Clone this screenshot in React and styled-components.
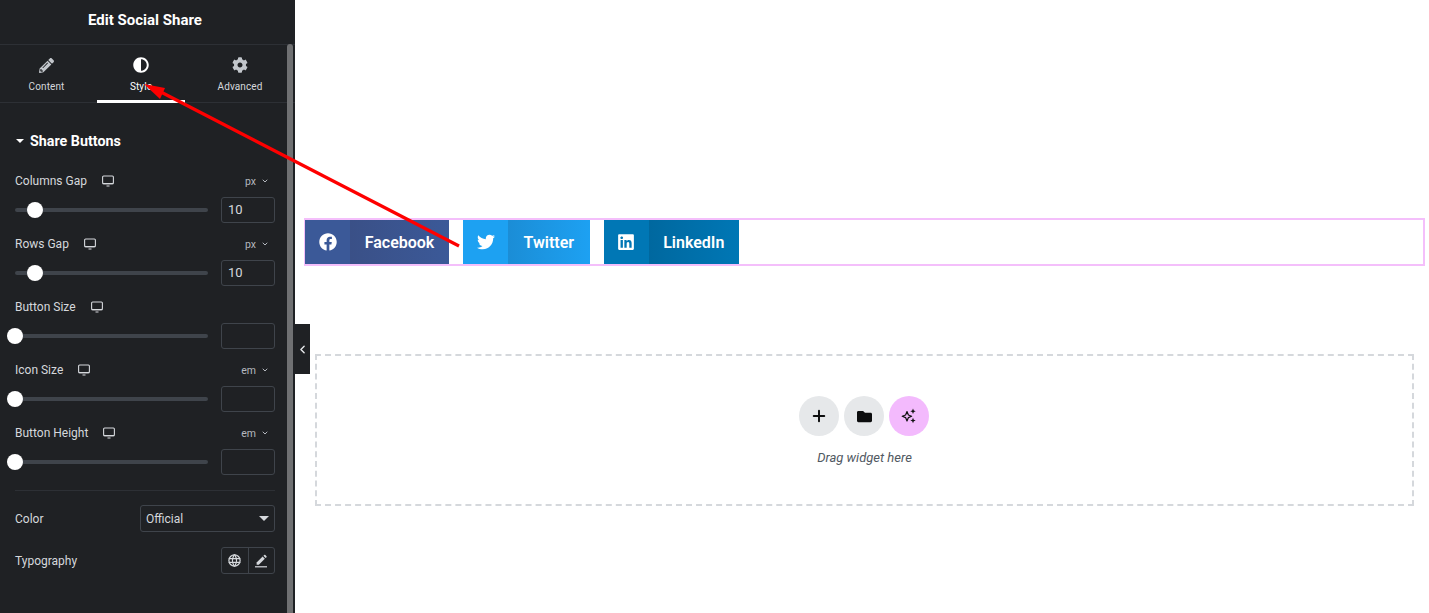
import styled, { createGlobalStyle } from "styled-components";
import { FaFacebook, FaTwitter, FaLinkedin, FaPencilAlt, FaAdjust, FaCog, FaFolder } from "react-icons/fa";
import { FiChevronDown, FiChevronLeft, FiPlus } from "react-icons/fi";
import { TbWorld } from "react-icons/tb";

const GlobalStyle = createGlobalStyle`
  html, body {
    margin: 0;
    height: 100%;
    overflow: hidden;
    background: #fff;
    font-family: Roboto, "Liberation Sans", sans-serif;
  }
  * {
    box-sizing: border-box;
  }
`;

const controls = [
  { label: "Columns Gap", unit: "px", value: "10", knob: 20 },
  { label: "Rows Gap", unit: "px", value: "10", knob: 20 },
  { label: "Button Size", unit: null, value: "", knob: 0 },
  { label: "Icon Size", unit: "em", value: "", knob: 0 },
  { label: "Button Height", unit: "em", value: "", knob: 0 },
];

const shares = [
  { name: "Facebook", Icon: FaFacebook, width: 144, color: "#3b5998", dark: "#3a5087" },
  { name: "Twitter", Icon: FaTwitter, width: 126.5, color: "#1da1f2", dark: "#1b8dd6" },
  { name: "LinkedIn", Icon: FaLinkedin, width: 135.5, color: "#0077b5", dark: "#00689f" },
];

function DesktopIcon() {
  return (
    <svg width="12" height="12" viewBox="0 0 12 12" fill="none" stroke="#d5d8dc" strokeWidth="1.1">
      <rect x="0.6" y="1" width="10.8" height="7.6" rx="1" />
      <path d="M0.6 8.6h10.8M4.5 11h3" />
    </svg>
  );
}

function EditIcon() {
  return (
    <svg width="14" height="14" viewBox="0 0 14 14" fill="#d5d8dc">
      <path d="M2.6 8.6 8.6 2.6l2.2 2.2-6 6H2.6z" />
      <path d="M9.4 1.8l.9-.8c.3-.3.7-.3 1 0l1.2 1.2c.3.3.3.7 0 1l-.9.8z" />
      <rect x="1" y="12.2" width="12" height="1.2" />
    </svg>
  );
}

function SparkleIcon() {
  return (
    <svg width="18" height="18" viewBox="0 0 18 18" fill="none">
      <path d="M7 4.6 8.4 8l3.2 1.2L8.4 10.6 7 14l-1.4-3.4L2.2 9.2 5.6 8z" stroke="#111" strokeWidth="1.2" strokeLinejoin="round" />
      <path d="M13 1.6l.8 1.9 1.9.8-1.9.8-.8 1.9-.8-1.9-1.9-.8 1.9-.8zM13 10.8l.8 1.9 1.9.8-1.9.8-.8 1.9-.8-1.9-1.9-.8 1.9-.8z" fill="#111" />
    </svg>
  );
}

export default function App() {
  return (
    <Page>
      <GlobalStyle />
      <Sidebar>
        <Header>Edit Social Share</Header>
        <Tabs>
          <Tab>
            <TabIcon><FaPencilAlt size={15} /></TabIcon>
            Content
          </Tab>
          <Tab $active>
            <TabIcon $active><FaAdjust size={16} /></TabIcon>
            Style
          </Tab>
          <Tab>
            <TabIcon><FaCog size={16} /></TabIcon>
            Advanced
          </Tab>
        </Tabs>
        <Panel>
          <SectionTitle>
            <Caret $size={4} />
            Share Buttons
          </SectionTitle>
          {controls.map((control) => (
            <Control key={control.label}>
              <LabelRow>
                <Label>{control.label}</Label>
                <DesktopIcon />
                {control.unit && (
                  <Unit>
                    {control.unit}
                    <FiChevronDown size={8} strokeWidth={3} />
                  </Unit>
                )}
              </LabelRow>
              <SliderRow>
                <Track>
                  <Knob $left={control.knob} />
                </Track>
                <NumberBox>{control.value}</NumberBox>
              </SliderRow>
            </Control>
          ))}
          <Divider />
          <FieldRow>
            <Label>Color</Label>
            <Select>
              Official
              <Caret $size={5} />
            </Select>
          </FieldRow>
          <TypographyRow>
            <Label>Typography</Label>
            <ButtonGroup>
              <GroupButton><TbWorld size={15} /></GroupButton>
              <GroupButton><EditIcon /></GroupButton>
            </ButtonGroup>
          </TypographyRow>
        </Panel>
        <Scrollbar />
      </Sidebar>
      <CollapseHandle>
        <FiChevronLeft size={13} strokeWidth={2.6} />
      </CollapseHandle>
      <Canvas>
        <Widget>
          {shares.map(({ name, Icon, width, color, dark }) => (
            <ShareButton key={name} $width={width} $color={color}>
              <ShareIcon><Icon size={18} /></ShareIcon>
              <ShareText $color={color} $dark={dark}>{name}</ShareText>
            </ShareButton>
          ))}
        </Widget>
        <DropZone>
          <DropActions>
            <RoundButton><FiPlus size={18} strokeWidth={2.6} /></RoundButton>
            <RoundButton><FaFolder size={15} /></RoundButton>
            <RoundButton $accent><SparkleIcon /></RoundButton>
          </DropActions>
          <DropText>Drag widget here</DropText>
        </DropZone>
      </Canvas>
      <Arrow width="1429" height="613" viewBox="0 0 1429 613">
        <path d="M459 246 157 90" stroke="#fe0000" strokeWidth="3.2" fill="none" />
        <path d="M144 84 165 88 160 99z" fill="#fe0000" />
      </Arrow>
    </Page>
  );
}

const Page = styled.div`
  position: relative;
  display: flex;
  width: 100%;
  height: 100vh;
  overflow: hidden;
`;

const Sidebar = styled.aside`
  position: relative;
  flex: 0 0 295px;
  height: 100%;
  background: #1f2124;
  color: #d5d8dc;
`;

const Header = styled.div`
  height: 45px;
  padding-top: 11px;
  border-bottom: 1px solid #2d3035;
  color: #fff;
  font-size: 15px;
  font-weight: 700;
  line-height: 18px;
  text-align: center;
  padding-right: 5px;
`;

const Tabs = styled.div`
  display: grid;
  grid-template-columns: 97px 88px 110px;
  height: 58px;
  border-bottom: 1px solid #2d3035;
`;

const Tab = styled.div`
  display: flex;
  flex-direction: column;
  align-items: center;
  height: 58px;
  padding-top: 11px;
  font-size: 10px;
  line-height: 13px;
  letter-spacing: 0.1px;
  color: ${(props) => (props.$active ? "#fff" : "#d5d8dc")};
  border-bottom: 3px solid ${(props) => (props.$active ? "#fff" : "transparent")};

  &:first-child {
    padding-right: 4px;
  }
`;

const TabIcon = styled.span`
  display: flex;
  align-items: center;
  justify-content: center;
  height: 18px;
  margin-bottom: 6px;
  color: ${(props) => (props.$active ? "#fff" : "#c2c6cb")};
`;

const Panel = styled.div`
  padding: 29px 20px 0 15px;
`;

const SectionTitle = styled.div`
  display: flex;
  align-items: center;
  gap: 6px;
  height: 18px;
  margin-bottom: 23px;
  padding-left: 1px;
  color: #fff;
  font-size: 14.3px;
  font-weight: 700;
  line-height: 18px;
`;

const Caret = styled.span`
  width: 0;
  height: 0;
  border-left: ${(props) => props.$size}px solid transparent;
  border-right: ${(props) => props.$size}px solid transparent;
  border-top: ${(props) => props.$size}px solid currentColor;
`;

const Control = styled.div`
  height: 63px;
`;

const LabelRow = styled.div`
  display: flex;
  align-items: center;
  gap: 15px;
  height: 16px;
  margin-bottom: 8px;
`;

const Label = styled.span`
  font-size: 12px;
  line-height: 16px;
  color: #d5d8dc;
`;

const Unit = styled.span`
  display: flex;
  align-items: center;
  gap: 5px;
  margin-left: auto;
  padding-right: 6px;
  font-size: 10.5px;
  color: #b4b8be;
`;

const SliderRow = styled.div`
  display: flex;
  align-items: center;
  gap: 13px;
`;

const Track = styled.div`
  position: relative;
  flex: 0 0 193px;
  height: 4px;
  border-radius: 2px;
  background: #3f444b;
`;

const Knob = styled.span`
  position: absolute;
  top: -6px;
  left: ${(props) => props.$left - 8}px;
  width: 16px;
  height: 16px;
  border-radius: 50%;
  background: #fff;
`;

const NumberBox = styled.div`
  flex: 0 0 54px;
  height: 26px;
  padding-left: 6px;
  border: 1px solid #3f444b;
  border-radius: 3px;
  font-size: 13px;
  line-height: 24px;
  color: #d5d8dc;
`;

const Divider = styled.div`
  height: 1px;
  margin-top: 2px;
  background: #2d3035;
`;

const FieldRow = styled.div`
  display: flex;
  align-items: center;
  justify-content: space-between;
  height: 27px;
  margin-top: 14px;
`;

const TypographyRow = styled(FieldRow)`
  margin-top: 15px;
`;

const Select = styled.div`
  display: flex;
  align-items: center;
  justify-content: space-between;
  width: 135px;
  height: 27px;
  padding: 0 5px;
  border: 1px solid #3f444b;
  border-radius: 3px;
  font-size: 12px;
  color: #d5d8dc;
`;

const ButtonGroup = styled.div`
  display: flex;
  width: 54px;
  height: 27px;
  border: 1px solid #3f444b;
  border-radius: 3px;
`;

const GroupButton = styled.div`
  display: flex;
  flex: 1;
  align-items: center;
  justify-content: center;
  color: #d5d8dc;

  & + & {
    border-left: 1px solid #3f444b;
  }
`;

const Scrollbar = styled.div`
  position: absolute;
  top: 44px;
  bottom: 0;
  left: 287px;
  width: 6px;
  border-radius: 3px 3px 0 0;
  background: #6f7072;
`;

const CollapseHandle = styled.div`
  position: absolute;
  top: 324px;
  left: 295px;
  display: flex;
  align-items: center;
  justify-content: center;
  width: 15px;
  height: 50px;
  background: #1f2124;
  color: #e6e8ea;
`;

const Canvas = styled.main`
  flex: 1;
  padding: 218px 4px 0 9px;
`;

const Widget = styled.div`
  display: flex;
  gap: 14px;
  height: 48px;
  border: 2px solid #f4bffb;
  border-left-width: 1px;
`;

const ShareButton = styled.div`
  display: flex;
  width: ${(props) => props.$width}px;
  background: ${(props) => props.$color};
  color: #fff;
`;

const ShareIcon = styled.div`
  display: flex;
  flex: 0 0 45px;
  align-items: center;
  justify-content: center;
`;

const ShareText = styled.div`
  display: flex;
  flex: 1;
  align-items: center;
  justify-content: center;
  background: linear-gradient(90deg, ${(props) => props.$dark}, ${(props) => props.$color});
  font-size: 16px;
  font-weight: 600;
`;

const DropZone = styled.div`
  display: flex;
  flex-direction: column;
  align-items: center;
  height: 152px;
  margin: 88px 11px 0 11px;
  padding-top: 40px;
  border: 2px dashed #d5d8dc;
`;

const DropActions = styled.div`
  display: flex;
  gap: 5px;
  margin-right: 1px;
`;

const RoundButton = styled.div`
  display: flex;
  align-items: center;
  justify-content: center;
  width: 40px;
  height: 40px;
  border-radius: 50%;
  background: ${(props) => (props.$accent ? "#f3bafd" : "#e6e8ea")};
  color: #0c0d0e;
`;

const DropText = styled.div`
  margin-top: 14px;
  font-size: 13px;
  font-style: italic;
  line-height: 16px;
  color: #515962;
`;

const Arrow = styled.svg`
  position: absolute;
  top: 0;
  left: 0;
  pointer-events: none;
`;
